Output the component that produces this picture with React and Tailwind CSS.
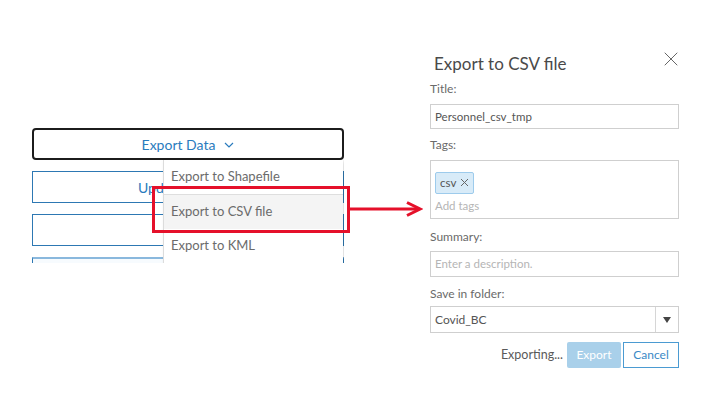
import { X } from 'lucide-react';

const font = { fontFamily: 'Lato, "Open Sans", sans-serif' };

function Field({ label, children, className = '' }) {
  return (
    <div className={className}>
      <div className="text-[12px] leading-[16px] text-[#6a6a6a]">{label}</div>
      {children}
    </div>
  );
}

function LeftPanel() {
  return (
    <div className="relative w-[312px] h-[263px] pt-[128px] overflow-hidden flex-none">
      <div className="flex flex-col gap-[11px]">
        <button className="h-[32px] w-full rounded-[4px] border-2 border-[#1c1c1c] flex items-center justify-center gap-[9px] text-[14px] text-[#2a7bbd]">
          Export Data
          <svg width="10" height="6" viewBox="0 0 10 6" className="mt-[1px]">
            <path d="M1 1 L5 5 L9 1" fill="none" stroke="#2a7bbd" strokeWidth="1.2" />
          </svg>
        </button>
        <button className="h-[32px] w-full border border-[#2d78b3] flex items-center pl-[105px] text-[14px] text-[#2a7bbd]">
          <span className="w-[25px] overflow-hidden whitespace-nowrap text-left">Update Data</span>
        </button>
        <button className="h-[32px] w-full border border-[#2d78b3]" />
        <button className="h-[32px] w-full border border-[#2d78b3] border-t-2 border-t-[#8ab8dd] bg-[#f7fbfe]" />
      </div>

      <div className="absolute left-[131px] top-[160px] w-[180px] h-[120px] bg-white border-l border-[#dcdcdc] shadow-[2px_1px_4px_rgba(0,0,0,0.15)] text-[13px] text-[#6b6b6b]">
        <div className="h-[35px] flex items-center pl-[7px] border-b border-[#dedede]">Export to Shapefile</div>
        <div className="h-[34px] flex items-center pl-[7px] bg-[#f4f4f4]">Export to CSV file</div>
        <div className="h-[34px] flex items-center pl-[7px]">Export to KML</div>
      </div>
    </div>
  );
}

function Dialog() {
  return (
    <div className="w-[249px] flex-none pt-[52px] text-[#555]">
      <div className="flex items-start justify-between">
        <h2 className="pl-[4px] text-[17px] leading-[24px] text-[#4a4a4a]">Export to CSV file</h2>
        <X size={24} strokeWidth={1} className="text-[#666] mt-[-5px] mr-[-4px]" />
      </div>

      <Field label="Title:" className="mt-[5px]">
        <div className="mt-[7px] h-[25px] border border-[#cfcfcf] flex items-center pl-[4px] text-[11.5px] text-[#555]">
          Personnel_csv_tmp
        </div>
      </Field>

      <Field label="Tags:" className="mt-[8px]">
        <div className="mt-[7px] h-[59px] border border-[#cfcfcf] px-[4px] pt-[8px]">
          <span className="inline-flex items-center gap-[4px] h-[22px] px-[4px] rounded-[2px] bg-[#d8ebf8] border border-[#9dcbec] text-[11.5px] text-[#555]">
            csv
            <svg width="9" height="9" viewBox="0 0 9 9">
              <path d="M1 1 L8 8 M8 1 L1 8" stroke="#666" strokeWidth="1" />
            </svg>
          </span>
          <div className="mt-[5px] text-[11.5px] leading-[14px] text-[#b5b5b5]">Add tags</div>
        </div>
      </Field>

      <Field label="Summary:" className="mt-[10px]">
        <div className="mt-[6px] h-[26px] border border-[#cfcfcf] flex items-center pl-[4px] text-[11.5px] text-[#b5b5b5]">
          Enter a description.
        </div>
      </Field>

      <Field label="Save in folder:" className="mt-[9px]">
        <div className="mt-[4px] h-[27px] border border-[#cfcfcf] flex items-stretch text-[12px] text-[#555]">
          <div className="flex-1 flex items-center pl-[4px]">Covid_BC</div>
          <div className="w-[23px] border-l border-[#d6d6d6] flex items-center justify-center">
            <svg width="8" height="6" viewBox="0 0 8 6">
              <path d="M0 0 H8 L4 6 Z" fill="#444" />
            </svg>
          </div>
        </div>
      </Field>

      <div className="mt-[9px] flex items-center justify-end gap-[2px]">
        <span className="text-[12.5px] text-[#5a5a5a] mr-[2px]">Exporting...</span>
        <div className="w-[54px] h-[26px] rounded-[2px] bg-[#a9d0ea] flex items-center justify-center text-[12px] text-white">Export</div>
        <div className="w-[56px] h-[26px] border border-[#4b9bd2] flex items-center justify-center text-[12px] text-[#3a89c6]">Cancel</div>
      </div>
    </div>
  );
}

export default function App() {
  return (
    <div className="relative w-[719px] h-[415px] bg-white overflow-hidden" style={font}>
      <div className="flex pl-[32px] gap-[86px]">
        <LeftPanel />
        <Dialog />
      </div>

      <div className="absolute left-[152px] top-[186px] w-[198px] h-[47px] border-[3px] border-[#e5102a]" />
      <svg className="absolute left-[349px] top-[200px]" width="74" height="18" viewBox="0 0 74 18">
        <path d="M0 9 H70" stroke="#e5102a" strokeWidth="3" />
        <path d="M58 2.5 L71 9 L58 15.5" fill="none" stroke="#e5102a" strokeWidth="3" strokeLinejoin="miter" />
      </svg>
    </div>
  );
}
